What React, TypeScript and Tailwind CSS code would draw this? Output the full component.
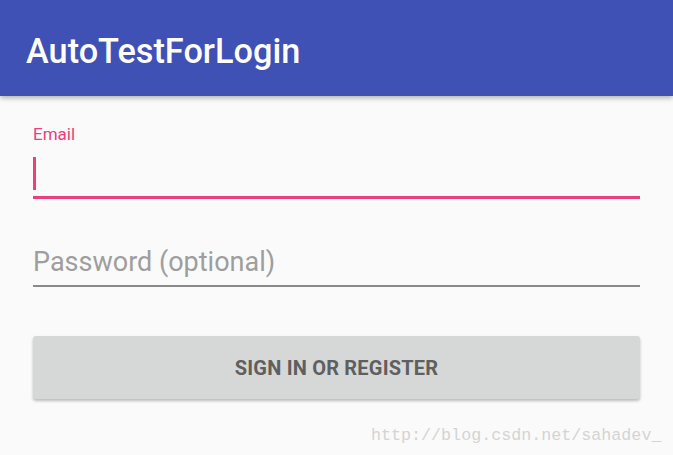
export default function App() {
  return (
    <div className="w-[673px] h-[455px] bg-[#fafafa] overflow-hidden relative" style={{ fontFamily: 'Roboto, "Noto Sans", sans-serif' }}>
      <header className="h-[96px] bg-[#3f51b5] flex items-center pl-[26px] pt-[6px] shadow-[0_2px_5px_rgba(0,0,0,0.3)] relative z-10">
        <h1 className="text-white text-[34.3px] font-medium leading-none">AutoTestForLogin</h1>
      </header>

      <div className="px-[33px] pt-[30px]">
        <label className="block text-[#ec407a] text-[17px] leading-none">Email</label>
        <div className="mt-[14px] h-[39px] flex items-start">
          <div className="w-[3px] h-[33px] bg-[#ec407a]" />
        </div>
        <div className="h-[3px] bg-[#ec407a]" />

        <div className="mt-[50px] text-[27px] leading-none text-[#9e9e9e]">Password (optional)</div>
        <div className="mt-[9px] h-[2px] bg-[#8a8a8a]" />

        <button className="mt-[49px] w-full h-[63px] rounded-[3px] bg-[#d6d7d7] shadow-[0_2px_3px_rgba(0,0,0,0.25)] text-[#5e5f5f] text-[20px] font-bold tracking-[0.2px]">
          SIGN IN OR REGISTER
        </button>
      </div>

      <div className="absolute left-[371px] top-[428px] text-[16.7px] leading-none text-[#d4d4d4]" style={{ fontFamily: '"Liberation Mono", monospace' }}>
        http://blog.csdn.net/sahadev_
      </div>
    </div>
  );
}
